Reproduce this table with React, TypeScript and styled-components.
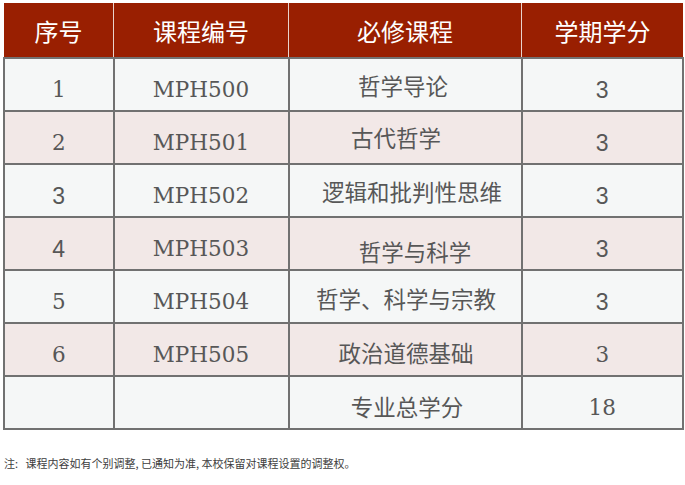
import React from "react";
import styled, { createGlobalStyle } from "styled-components";

const Global = createGlobalStyle`
  html, body { margin: 0; padding: 0; background: #ffffff; }
  body { font-family: "Noto Sans CJK SC", "Noto Sans", sans-serif; }
`;

const Page = styled.div`
  padding: 3px 3px 0 3px;
  width: 679px;
`;

const Table = styled.table`
  width: 676px;
  border-collapse: collapse;
  table-layout: fixed;
`;

const HeadCell = styled.th<{ $w: number }>`
  width: ${(p) => p.$w}px;
  height: 54px;
  padding: 0;
  background: #991f01;
  color: #ffffff;
  font-family: "Noto Sans CJK SC", sans-serif;
  font-weight: 400;
  font-size: 24px;
  text-align: center;
  vertical-align: middle;
  border-left: 1px solid #e9d3cc;
  border-bottom: 2px solid #737373;
  &:first-child { border-left: none; }
`;

const Row = styled.tr<{ $alt: boolean }>`
  height: 53px;
  background: ${(p) => (p.$alt ? "#f2e8e7" : "#f5f7f7")};
`;

const Cell = styled.td<{ $font: "serif" | "sans" | "cjk"; $dx?: number; $dy?: number }>`
  padding-top: ${(p) => (p.$font === "cjk" ? p.$dy ?? 2 : 11)}px;
  padding-bottom: 0;
  padding-left: ${(p) => Math.max(0, (p.$dx ?? 0) * 2)}px;
  padding-right: ${(p) => Math.max(0, -(p.$dx ?? 0) * 2)}px;
  border: 2px solid #717171;
  text-align: center;
  vertical-align: middle;
  color: #575757;
  font-family: ${(p) =>
    p.$font === "serif"
      ? '"DejaVu Serif", "Liberation Serif", serif'
      : p.$font === "sans"
      ? '"Liberation Sans", Arial, sans-serif'
      : '"Noto Sans CJK SC", sans-serif'};
  font-size: ${(p) => (p.$font === "serif" ? 21.5 : p.$font === "sans" ? 23 : 22.5)}px;
  line-height: 1;
`;

const Note = styled.p`
  margin: 25px 0 0 1px;
  font-family: "Noto Sans CJK SC", sans-serif;
  font-size: 11px;
  color: #3d3d3d;
  white-space: pre;
`;

type R = {
  n: string;
  nSans: boolean;
  code: string;
  course: string;
  dx: number;
  dy: number;
  credit: string;
  cSans: boolean;
};

const rows: R[] = [
  { n: "1", nSans: false, code: "MPH500", course: "哲学导论", dx: -2, dy: 2, credit: "3", cSans: true },
  { n: "2", nSans: false, code: "MPH501", course: "古代哲学", dx: -9, dy: 0, credit: "3", cSans: true },
  { n: "3", nSans: true, code: "MPH502", course: "逻辑和批判性思维", dx: 7, dy: 2, credit: "3", cSans: true },
  { n: "4", nSans: true, code: "MPH503", course: "哲学与科学", dx: 10, dy: 16, credit: "3", cSans: true },
  { n: "5", nSans: false, code: "MPH504", course: "哲学、科学与宗教", dx: 1, dy: 3, credit: "3", cSans: true },
  { n: "6", nSans: false, code: "MPH505", course: "政治道德基础", dx: 1, dy: 5, credit: "3", cSans: false },
];

export default function App() {
  return (
    <>
      <Global />
      <Page>
        <Table>
          <thead>
            <tr>
              <HeadCell $w={109}>序号</HeadCell>
              <HeadCell $w={174}>课程编号</HeadCell>
              <HeadCell $w={232}>必修课程</HeadCell>
              <HeadCell $w={161}>学期学分</HeadCell>
            </tr>
          </thead>
          <tbody>
            {rows.map((r, i) => (
              <Row key={r.code} $alt={i % 2 === 1}>
                <Cell $font={r.nSans ? "sans" : "serif"}>{r.n}</Cell>
                <Cell $font="serif">{r.code}</Cell>
                <Cell $font="cjk" $dx={r.dx} $dy={r.dy}>
                  {r.course}
                </Cell>
                <Cell $font={r.cSans ? "sans" : "serif"}>{r.credit}</Cell>
              </Row>
            ))}
            <Row $alt={false}>
              <Cell $font="serif"></Cell>
              <Cell $font="serif"></Cell>
              <Cell $font="cjk" $dx={2} $dy={8}>
                专业总学分
              </Cell>
              <Cell $font="serif">18</Cell>
            </Row>
          </tbody>
        </Table>
        <Note>{"注:   课程内容如有个别调整, 已通知为准, 本校保留对课程设置的调整权。"}</Note>
      </Page>
    </>
  );
}
